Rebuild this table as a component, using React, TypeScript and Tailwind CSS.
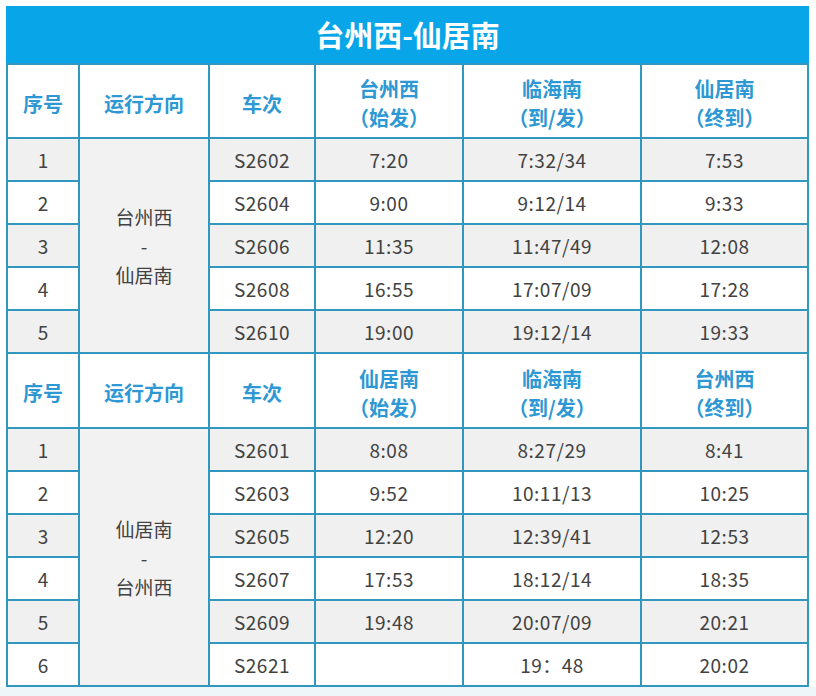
const font = { fontFamily: '"Noto Sans CJK SC", "Noto Sans", sans-serif' }

type Block = {
  from: string
  to: string
  rows: { no: number; train: string; dep: string; mid: string; arr: string }[]
}

const blocks: Block[] = [
  {
    from: '台州西',
    to: '仙居南',
    rows: [
      { no: 1, train: 'S2602', dep: '7:20', mid: '7:32/34', arr: '7:53' },
      { no: 2, train: 'S2604', dep: '9:00', mid: '9:12/14', arr: '9:33' },
      { no: 3, train: 'S2606', dep: '11:35', mid: '11:47/49', arr: '12:08' },
      { no: 4, train: 'S2608', dep: '16:55', mid: '17:07/09', arr: '17:28' },
      { no: 5, train: 'S2610', dep: '19:00', mid: '19:12/14', arr: '19:33' }
    ]
  },
  {
    from: '仙居南',
    to: '台州西',
    rows: [
      { no: 1, train: 'S2601', dep: '8:08', mid: '8:27/29', arr: '8:41' },
      { no: 2, train: 'S2603', dep: '9:52', mid: '10:11/13', arr: '10:25' },
      { no: 3, train: 'S2605', dep: '12:20', mid: '12:39/41', arr: '12:53' },
      { no: 4, train: 'S2607', dep: '17:53', mid: '18:12/14', arr: '18:35' },
      { no: 5, train: 'S2609', dep: '19:48', mid: '20:07/09', arr: '20:21' },
      { no: 6, train: 'S2621', dep: '', mid: '19：48', arr: '20:02' }
    ]
  }
]

function HeadCell({ children }: { children: React.ReactNode }) {
  return (
    <div className="bg-white flex flex-col items-center justify-center pt-[4px] text-[20px] font-bold leading-[29px] text-[#2d98d3]">
      {children}
    </div>
  )
}

function BlockRows({ block }: { block: Block }) {
  return (
    <>
      <HeadCell>序号</HeadCell>
      <HeadCell>运行方向</HeadCell>
      <HeadCell>车次</HeadCell>
      <HeadCell>
        <span>{block.from}</span>
        <span>（始发）</span>
      </HeadCell>
      <HeadCell>
        <span>临海南</span>
        <span>（到/发）</span>
      </HeadCell>
      <HeadCell>
        <span>{block.to}</span>
        <span>（终到）</span>
      </HeadCell>
      {block.rows.map((r, i) => {
        const bg = i % 2 === 0 ? 'bg-[#f0f0f0]' : 'bg-white'
        return (
          <div key={r.no} className="contents">
            <div className={`${bg} flex items-center justify-center pt-[2px]`}>{r.no}</div>
            {i === 0 && (
              <div
                className={`bg-[#f2f2f2] flex flex-col items-center justify-center leading-[29px] ${
                  block.rows.length === 6 ? 'row-span-6' : 'row-span-5'
                }`}
              >
                <span>{block.from}</span>
                <span>-</span>
                <span>{block.to}</span>
              </div>
            )}
            <div className={`${bg} flex items-center justify-center pt-[2px] tracking-[0.5px]`}>{r.train}</div>
            <div className={`${bg} flex items-center justify-center pt-[2px] tracking-[0.5px]`}>{r.dep}</div>
            <div className={`${bg} flex items-center justify-center pt-[2px] tracking-[0.5px]`}>{r.mid}</div>
            <div className={`${bg} flex items-center justify-center pt-[2px] tracking-[0.5px]`}>{r.arr}</div>
          </div>
        )
      })}
    </>
  )
}

export default function App() {
  return (
    <div className="w-[816px] h-[696px] bg-white flex flex-col overflow-hidden" style={font}>
      <div className="pt-[6px] pl-[6px]">
        <div className="w-[803px] h-[57px] bg-[#08a6e8] flex items-center justify-center text-white text-[29px] font-bold">
          台州西-仙居南
        </div>
        <div className="w-[803px] grid grid-cols-[70px_128px_104px_146px_176px_165px] grid-rows-[72px_repeat(5,41px)_73px_repeat(6,41px)] gap-[2px] p-[2px] bg-[#3297bf] text-[19px] text-[#424242]">
          {blocks.map((b) => (
            <BlockRows key={b.from} block={b} />
          ))}
        </div>
      </div>
      <div className="flex-1 bg-[#eff6f9]" />
    </div>
  )
}
